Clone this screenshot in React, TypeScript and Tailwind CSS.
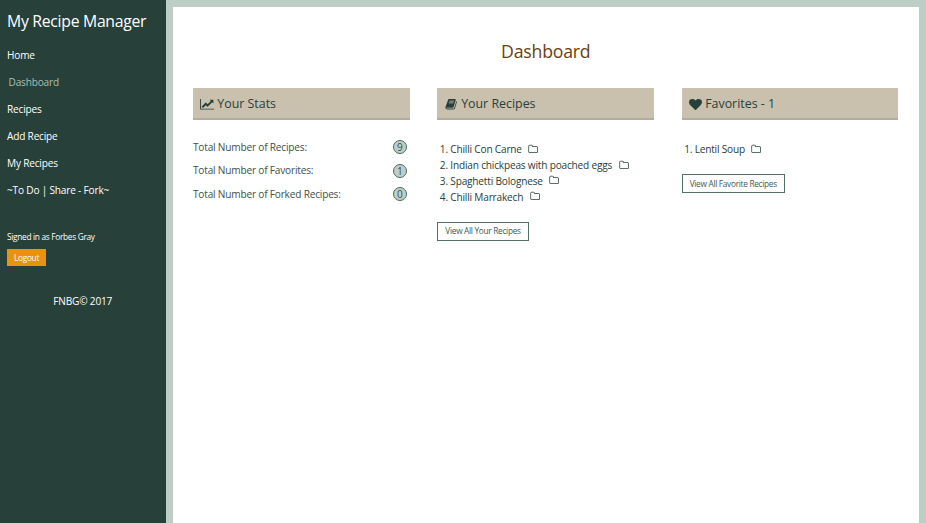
import React from "react";

type IconProps = { viewBox: string; path: string; className: string };

function Icon({ viewBox, path, className }: IconProps) {
  return (
    <svg viewBox={viewBox} className={className} fill="currentColor" aria-hidden="true">
      <path d={path} />
    </svg>
  );
}

const CHART =
  "M2048 1536v128H0V128h128v1408h1920zm-128-1248v435q0 21-19.5 29.5t-35.5-7.5l-121-121-633 633q-10 10-23 10t-23-10l-233-233-416 416-192-192 585-585q10-10 23-10t23 10l233 233 464-464-121-121q-16-16-7.5-35.5t29.5-19.5h435q14 0 23 9t9 23z";
const BOOK =
  "M1703 478q40 57 18 129l-275 906q-19 64-76.5 107.5t-122.5 43.5h-923q-77 0-148.5-53.5t-99.5-131.5q-24-67-2-127 0-4 3-27t4-37q1-8-3-21.5t-3-19.5q2-11 8-21t16.5-23.5 16.5-23.5q23-38 45-91.5t30-91.5q3-10 .5-30t-.5-28q3-11 17-28t17-23q21-36 42-92t25-90q1-9-2.5-32t.5-28q4-13 22-30.5t22-22.5q19-26 42.5-84.5t27.5-96.5q1-8-3-25.5t-2-26.5q2-8 9-18t18-23 17-21q8-12 16.5-30.5t15-35 16-36 19.5-32 26.5-23.5 36-11.5 47.5 5.5l-1 3q38-9 51-9h761q74 0 114 56t18 130l-274 906q-36 119-71.5 153.5t-128.5 34.5h-869q-27 0-38 15-11 16-1 43 24 70 144 70h923q29 0 56-15.5t35-41.5l300-987q7-22 5-57 38 15 59 43zm-1064 2q-4 13 2 22.5t20 9.5h608q13 0 25.5-9.5t16.5-22.5l21-64q4-13-2-22.5t-20-9.5h-608q-13 0-25.5 9.5t-16.5 22.5zm-83 256q-4 13 2 22.5t20 9.5h608q13 0 25.5-9.5t16.5-22.5l21-64q4-13-2-22.5t-20-9.5h-608q-13 0-25.5 9.5t-16.5 22.5z";
const HEART =
  "M896 1664q-26 0-44-18l-624-602q-10-8-27.5-26t-55.5-65.5-68-97.5-53.5-121-23.5-138q0-220 127-344t351-124q62 0 126.5 21.5t120 58 95.5 68.5 76 68q36-36 76-68t95.5-68.5 120-58 126.5-21.5q224 0 351 124t127 344q0 221-229 450l-623 600q-18 18-44 18z";
const FOLDER =
  "M1600 1312v-704q0-40-28-68t-68-28h-704q-40 0-68-28t-28-68v-64q0-40-28-68t-68-28h-320q-40 0-68 28t-28 68v960q0 40 28 68t68 28h1216q40 0 68-28t28-68zm128-704v704q0 92-66 158t-158 66h-1216q-92 0-158-66t-66-158v-960q0-92 66-158t158-66h320q92 0 158 66t66 158v32h672q92 0 158 66t66 158z";

const NAV = ["Home", "Dashboard", "Recipes", "Add Recipe", "My Recipes", "~To Do | Share - Fork~"];

const STATS = [
  { label: "Total Number of Recipes:", value: 9 },
  { label: "Total Number of Favorites:", value: 1 },
  { label: "Total Number of Forked Recipes:", value: 0 },
];

function Heading({ icon, children }: { icon: React.ReactNode; children: React.ReactNode }) {
  return (
    <h2 className="flex h-8 items-center border-b-2 border-[#b1aba0] bg-[#cac0ae] pt-[2px] pl-[7px] text-[12.4px] leading-none text-[#28403a]">
      {icon}
      <span>{children}</span>
    </h2>
  );
}

function RecipeList({ items }: { items: string[] }) {
  return (
    <ol className="mt-[21px] pl-[2.5px] text-[10.1px] leading-4 tracking-[-0.19px] text-[#28403a]">
      {items.map((name, i) => (
        <li key={name} className="flex h-[15.9px] items-center whitespace-nowrap">
          <span className="w-[10.5px]">{i + 1}.</span>
          <span>{name}</span>
          <Icon viewBox="0 0 1728 1792" path={FOLDER} className="ml-[6.5px] h-[10.5px] w-[10px]" />
        </li>
      ))}
    </ol>
  );
}

function ViewAll({ children }: { children: React.ReactNode }) {
  return (
    <button className="flex h-[19px] items-center border border-[#527069] px-[7px] pt-px text-[8.3px] leading-none tracking-[-0.3px] whitespace-nowrap text-[#3d5a53]">
      {children}
    </button>
  );
}

export default function App() {
  return (
    <div className="flex h-[523px] w-[926px] overflow-hidden bg-[#bdcec6] font-['Open_Sans',sans-serif]">
      <aside className="w-[165.5px] shrink-0 bg-[#28403a] px-[7px] text-[10.1px] tracking-[-0.19px] text-white">
        <h1 className="pt-[10px] text-[15.75px] leading-[22px] tracking-[-0.28px] whitespace-nowrap">My Recipe Manager</h1>
        <nav className="mt-[10.6px]">
          {NAV.map((item) => (
            <a
              key={item}
              className={
                item === "Dashboard"
                  ? "flex h-[26.9px] items-center pl-[1.5px] text-[#a9bfb5]"
                  : "flex h-[26.9px] items-center"
              }
            >
              {item}
            </a>
          ))}
        </nav>
        <p className="mt-[27px] text-[8.3px] leading-[12px] tracking-[-0.3px]">Signed in as Forbes Gray</p>
        <button className="mt-[6px] flex h-[17.5px] items-center bg-[#e9930b] px-[7px] pt-px text-[8.3px] leading-none tracking-[-0.3px]">
          Logout
        </button>
        <p className="mt-[28px] text-center leading-[14px]">FNBG© 2017</p>
      </aside>
      <main className="mt-[7px] mr-[7px] ml-[7px] min-w-0 flex-1 bg-white px-[20.5px]">
        <h1 className="pt-[32px] text-center text-[17.7px] leading-[25px] tracking-[-0.22px] text-[#6b4010]">Dashboard</h1>
        <div className="mt-[24px] grid grid-cols-3 gap-x-[27.5px]">
          <section>
            <Heading icon={<Icon viewBox="0 0 2048 1792" path={CHART} className="mr-[3px] h-[12.5px] w-[14.3px]" />}>
              Your Stats
            </Heading>
            <div className="mt-[15.3px] text-[10.1px] tracking-[-0.19px] text-[#40504c]">
              {STATS.map((s) => (
                <div key={s.label} className="flex h-[23.6px] items-center justify-between pr-[3px]">
                  <span>{s.label}</span>
                  <span className="flex h-[14px] w-[14px] items-center justify-center rounded-full border border-[#4d6a62] bg-[#bdd0c8] leading-none">
                    {s.value}
                  </span>
                </div>
              ))}
            </div>
          </section>
          <section>
            <Heading icon={<Icon viewBox="0 0 1792 1792" path={BOOK} className="mr-[3.5px] ml-px h-[12.3px] w-[12.3px]" />}>
              Your Recipes
            </Heading>
            <RecipeList
              items={["Chilli Con Carne", "Indian chickpeas with poached eggs", "Spaghetti Bolognese", "Chilli Marrakech"]}
            />
            <div className="mt-[17px]">
              <ViewAll>View All Your Recipes</ViewAll>
            </div>
          </section>
          <section>
            <Heading icon={<Icon viewBox="0 0 1792 1792" path={HEART} className="mr-[3.5px] h-[13px] w-[13px]" />}>
              Favorites - 1
            </Heading>
            <RecipeList items={["Lentil Soup"]} />
            <div className="mt-[17px]">
              <ViewAll>View All Favorite Recipes</ViewAll>
            </div>
          </section>
        </div>
      </main>
    </div>
  );
}
